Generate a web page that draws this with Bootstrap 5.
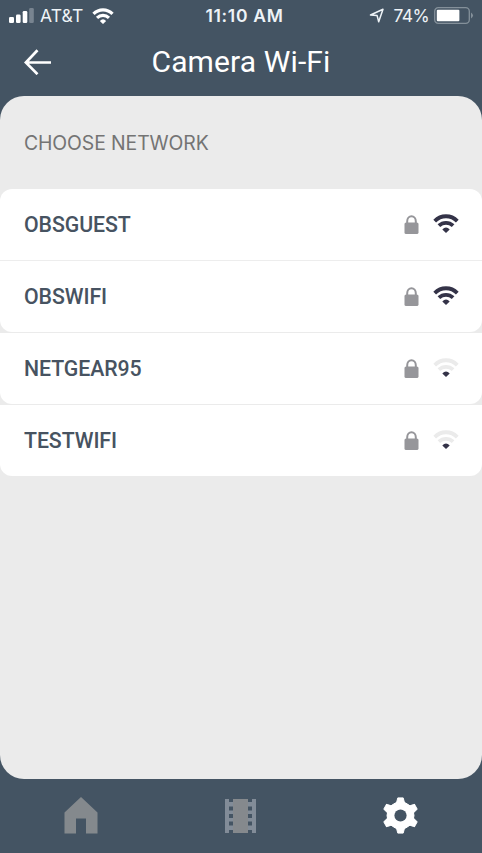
<!DOCTYPE html>
<html lang="en">
<head>
<meta charset="utf-8">
<meta name="viewport" content="width=device-width, initial-scale=1">
<title>Camera Wi-Fi</title>
<link href="https://cdn.jsdelivr.net/npm/bootstrap@5.3.0/dist/css/bootstrap.min.css" rel="stylesheet">
<style>
  body { background: #445463; font-family: Roboto, "Liberation Sans", sans-serif; height: 853px; }
  svg { display: block; flex: none; }
  .status-bar { height: 31px; padding: 0 8px 0 9px; font: 17.5px/31px Inter, sans-serif; color: #eef3f7; }
  .status-bar > div { flex: 1 1 0; }
  .carrier { letter-spacing: .15px; margin: 0 9px 0 6px; }
  .clock { font-weight: 600; font-size: 17.5px; letter-spacing: .7px; line-height: 32px; margin-left: 6px; }
  .charge { letter-spacing: -.6px; margin: 0 5px 0 9px; }
  .title-bar { height: 65px; padding: 0 24px; }
  .title-bar h1 { font-size: 30px; line-height: 61px; letter-spacing: .12px; }
  .title-bar > a, .title-bar > span { width: 28px; }
  .sheet { background: #ebebeb; border-radius: 24px; height: 683px; }
  .section-label { font-family: Inter, sans-serif; font-size: 19.4px; line-height: 93px; height: 93px; color: #747474; padding: 1px 0 0 24px; letter-spacing: -.1px; }
  .network { height: 72px; padding: 1px 23px 0 24px; color: #475361 !important; font-size: 21.3px; line-height: 32px; font-weight: 500; letter-spacing: -.08px; border: 0; border-bottom: 1px solid #ededed; }
  .networks { background: #ebebeb; border-radius: 12px; }
  .network:first-child { border-radius: 12px 12px 0 0; }
  .network.closed { border: 0; border-radius: 0 0 12px 12px; height: 71px; margin-bottom: 1px; }
  .network .lock { margin: 0 14px 1px 0; }
  .network .signal { margin-bottom: 3px; }
  .tab-bar { height: 74px; padding: 0 1.5px 1px .5px; }
</style>
<script src="https://cdn.jsdelivr.net/npm/bootstrap@5.3.0/dist/js/bootstrap.bundle.min.js"></script>
</head>
<body class="d-flex flex-column overflow-hidden">
<svg width="0" height="0" class="position-absolute" aria-hidden="true">
  <defs>
    <g id="waves" fill="none" stroke-width="3.8">
      <path d="M1.7 7.1C8 .6 18 .6 24.3 7.1"/>
      <path d="M5.9 11.7C10 7.8 16 7.8 20.1 11.7"/>
    </g>
    <path id="dot" stroke-width="0" d="M9.3 15.4Q13 11.4 16.7 15.4L13 19.1Z"/>
    <g id="lock">
      <path d="M3.2 9V6.2a4.3 5 0 0 1 8.6 0V9" fill="none" stroke="#96969a" stroke-width="2"/>
      <rect x=".5" y="7.5" width="14" height="11.5" rx="1.6" fill="#96969a"/>
    </g>
  </defs>
</svg>
<header class="text-white">
  <div class="status-bar d-flex align-items-center">
    <div class="d-flex align-items-center">
      <svg width="25" height="16" fill="#fff"><rect y="9" width="5" height="6" rx="1.3"/><rect x="7" y="6.5" width="4.6" height="8.5" rx="1.3"/><rect x="13.7" y="3" width="4.6" height="12" rx="1.3"/><rect x="20.2" y="0" width="4.6" height="15" rx="1.3" fill="#788490"/></svg>
      <span class="carrier">AT&amp;T</span>
      <svg width="22" height="16" viewBox="0 0 26 19" stroke="#fff" fill="#fff"><use href="#waves"/><use href="#dot"/></svg>
    </div>
    <span class="clock">11:10 AM</span>
    <div class="d-flex align-items-center justify-content-end">
      <svg width="15" height="15" fill="none" stroke="#eef3f7" stroke-width="1.5" stroke-linejoin="round"><path d="M1.5 7 14 1.2 9.7 13.7 8.1 7.6Z"/></svg>
      <span class="charge">74%</span>
      <svg width="40" height="17"><rect x=".7" y=".7" width="34.6" height="15.6" rx="3.6" fill="none" stroke="#84909a" stroke-width="1.3"/><rect x="2.8" y="2.8" width="22.6" height="11.4" rx="1" fill="#fff"/><path d="M37 5.5q4 3 0 6Z" fill="#84909a"/></svg>
    </div>
  </div>
  <div class="title-bar d-flex justify-content-between">
    <a href="#" aria-label="Back"><svg width="28" height="28" class="mt-3" viewBox="0 -2 28 28" fill="none" stroke="#fff" stroke-width="2.7"><path d="M27 13.5H2M13.5 1.2 1.8 13.5 13.5 25.2"/></svg></a>
    <h1 class="m-0 fw-normal">Camera Wi-Fi</h1>
    <span></span>
  </div>
</header>
<main class="sheet overflow-hidden">
  <h2 class="section-label m-0 fw-normal">CHOOSE NETWORK</h2>
  <div class="networks list-group list-group-flush">
    <a href="#" class="network list-group-item d-flex align-items-center"><span class="me-auto">OBSGUEST</span><svg width="15" height="20" class="lock"><use href="#lock"/></svg><svg class="signal" width="26" height="20" stroke="#343348" fill="#343348"><use href="#waves"/><use href="#dot"/></svg></a>
    <a href="#" class="network closed list-group-item d-flex align-items-center"><span class="me-auto">OBSWIFI</span><svg width="15" height="20" class="lock"><use href="#lock"/></svg><svg class="signal" width="26" height="20" stroke="#343348" fill="#343348"><use href="#waves"/><use href="#dot"/></svg></a>
    <a href="#" class="network closed list-group-item d-flex align-items-center"><span class="me-auto">NETGEAR95</span><svg width="15" height="20" class="lock"><use href="#lock"/></svg><svg class="signal" width="26" height="20"><use href="#waves" stroke="#ebebeb"/><use href="#dot" fill="#343348"/></svg></a>
    <a href="#" class="network closed list-group-item d-flex align-items-center"><span class="me-auto">TESTWIFI</span><svg width="15" height="20" class="lock"><use href="#lock"/></svg><svg class="signal" width="26" height="20"><use href="#waves" stroke="#ebebeb"/><use href="#dot" fill="#343348"/></svg></a>
  </div>
</main>
<nav class="tab-bar row g-0 mx-0 align-items-center">
  <a href="#" class="col d-flex justify-content-center" aria-label="Home"><svg width="34" height="37" fill="#84898d"><path d="M.5 15.5 17 0 33.5 15.5V36.5h-11.5V21.5h-10V36.5H.5Z"/></svg></a>
  <a href="#" class="col d-flex justify-content-center" aria-label="Videos"><svg width="31" height="34"><path fill="#828c98" d="M0 0h31v34H0Z"/><path fill="#85898d" d="M8 0h15v34H8Z"/><path fill="#445463" d="M4 0h4v3H4ZM4 7.5h4v4H4ZM4 15h4v4H4ZM4 22.5h4v4H4ZM4 31h4v3H4ZM23 0h4v3h-4ZM23 7.5h4v4h-4ZM23 15h4v4h-4ZM23 22.5h4v4h-4ZM23 31h4v3h-4Z"/></svg></a>
  <a href="#" class="col d-flex justify-content-center" aria-label="Settings"><svg width="37" height="37" viewBox="-18.5 -18.5 37 37"><g fill="#fff" stroke="#fff" stroke-width="1" stroke-linejoin="round"><circle r="13.5"/><path id="tooth" d="M-4.2-12-2.7-17.6H2.7L4.2-12V12L2.7 17.6H-2.7L-4.2 12Z"/><use href="#tooth" transform="rotate(60)"/><use href="#tooth" transform="rotate(120)"/></g><circle r="6.1" fill="#445463"/></svg></a>
</nav>
</body>
</html>
